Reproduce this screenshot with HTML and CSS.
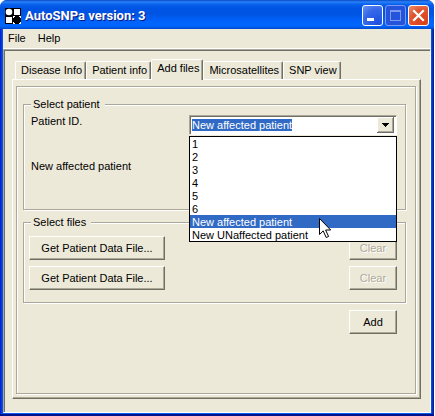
FILE: index.html
```html
<!DOCTYPE html>
<html lang="en">
<head>
    <meta charset="UTF-8">
    <meta name="viewport" content="width=device-width, initial-scale=1.0">
    <title>AutoSNPa version: 3</title>
    <link rel="stylesheet" href="styles.css">
</head>
<body>
    <div class="window">
        <header class="titlebar">
            <svg class="app-icon" width="16" height="16" viewBox="0 0 16 16" aria-hidden="true">
                <rect width="16" height="16" fill="#000"/>
                <circle cx="4" cy="4" r="3.3" fill="#fff"/>
                <rect x="9" y="1" width="6" height="6" fill="#fff"/>
                <rect x="1" y="9" width="6" height="6" fill="#fff"/>
                <path d="M8 8h2v1H9v1H8zM14 8h2v2h-1V9h-1zM8 14h1v1h1v1H8zM15 14h1v2h-2v-1h1z" fill="#fff"/>
            </svg>
            <h1>AutoSNPa version: 3</h1>
            <div class="window-buttons">
                <button class="win-btn" type="button" aria-label="Minimize">
                    <svg width="19" height="19" viewBox="0 0 19 19"><rect x="4" y="12" width="7" height="3" fill="#fff"/></svg>
                </button>
                <button class="win-btn win-max" type="button" aria-label="Maximize" disabled>
                    <svg width="19" height="19" viewBox="0 0 19 19"><path d="M4 4h11v11H4zM5 6v8h9V6z" fill="#7d98ec" fill-rule="evenodd"/></svg>
                </button>
                <button class="win-btn win-close" type="button" aria-label="Close">
                    <svg width="19" height="19" viewBox="0 0 19 19"><path d="M5 5l9 9M14 5l-9 9" stroke="#fff" stroke-width="2.2" stroke-linecap="square"/></svg>
                </button>
            </div>
        </header>

        <nav class="menubar">
            <button type="button">File</button>
            <button type="button">Help</button>
        </nav>

        <main class="client">
            <div class="tabs" role="tablist">
                <button class="tab" role="tab" type="button">Disease Info</button>
                <button class="tab" role="tab" type="button">Patient info</button>
                <button class="tab active" role="tab" type="button" aria-selected="true">Add files</button>
                <button class="tab" role="tab" type="button">Microsatellites</button>
                <button class="tab" role="tab" type="button">SNP view</button>
            </div>
            <div class="tab-panel">
                <form class="frame">
                    <fieldset class="select-patient">
                        <legend>Select patient</legend>
                        <div class="row">
                            <label for="patientId">Patient ID.</label>
                            <div class="combo">
                                <input type="text" id="patientId" value="New affected patient" autocomplete="off" spellcheck="false">
                                <button class="combo-arrow" type="button" aria-label="Show patients">
                                    <svg width="7" height="4" viewBox="0 0 7 4" shape-rendering="crispEdges"><path d="M0 0h7v1H6v1H5v1H4v1H3V3H2V2H1V1H0z"/></svg>
                                </button>
                                <select class="combo-list" id="patientList" size="8" aria-label="Patients">
                                    <option>1</option>
                                    <option>2</option>
                                    <option>3</option>
                                    <option>4</option>
                                    <option>5</option>
                                    <option>6</option>
                                    <option selected>New affected patient</option>
                                    <option>New UNaffected patient</option>
                                </select>
                                <svg class="pointer" width="13" height="21" viewBox="0 0 13 21" aria-hidden="true">
                                    <path d="M.5 .5v16l3.7-3.6 3 6.6 2.4-1-3-6.5h5.1z" fill="#fff" stroke="#000"/>
                                </svg>
                            </div>
                        </div>
                        <output class="status" id="patientStatus">New affected patient</output>
                    </fieldset>

                    <fieldset class="select-files">
                        <legend>Select files</legend>
                        <div class="row">
                            <button class="btn btn-wide" type="button">Get Patient Data File...</button>
                            <button class="btn" type="button" disabled>Clear</button>
                        </div>
                        <div class="row">
                            <button class="btn btn-wide" type="button">Get Patient Data File...</button>
                            <button class="btn" type="button" disabled>Clear</button>
                        </div>
                    </fieldset>

                    <div class="actions">
                        <button class="btn" type="button">Add</button>
                    </div>
                </form>
            </div>
        </main>
    </div>
    <script>
        const patientId = document.getElementById("patientId");
        const patientList = document.getElementById("patientList");

        patientList.addEventListener("change", function() {
            patientId.value = patientList.value;
            document.getElementById("patientStatus").textContent = patientList.value;
        });

        patientId.focus();
        patientId.select();
    </script>
</body>
</html>
```
FILE: styles.css
```css
* {
    box-sizing: border-box;
}
body {
    margin: 0;
    padding-right: 1px;
    background: #fff;
    color: #000;
    font-family: "Liberation Sans", Arial, sans-serif;
    font-size: 11px;
    line-height: 13px;
}
button, input, select {
    margin: 0;
    padding: 0;
    border: none;
    border-radius: 0;
    background: none;
    color: inherit;
    font: inherit;
    outline: none;
}
svg {
    display: block;
}

/* window */
.window {
    display: flex;
    flex-direction: column;
    min-height: 100vh;
    padding: 0 3px 3px;
    border-radius: 7px 7px 0 0;
    background: linear-gradient(to right, #0019cf, #0a5be8 3px, #0a5be8 calc(100% - 3px), #00138c);
    box-shadow: inset 0 -2px #00138c;
}
.titlebar {
    display: flex;
    align-items: center;
    height: 29px;
    margin: 0 -3px;
    padding: 2px 5px 0;
    border-radius: 7px 7px 0 0;
    background: linear-gradient(#0a48c8, #2b84f8 2px, #0a63ee 4px, #0054e3 8px, #0054e3 14px, #0062fb 21px, #0066ff 26px, #0049cc);
    color: #fff;
}
.titlebar h1 {
    flex: 1;
    margin: 0 0 0 4px;
    font: bold 13px/18px Roboto, "Open Sans", sans-serif;
    text-shadow: 1px 1px #0a1883;
}
.window-buttons {
    display: flex;
    gap: 2px;
}
.win-btn {
    width: 21px;
    height: 21px;
    border: 1px solid #fff;
    border-radius: 3px;
    background: radial-gradient(circle at 80% 90%, #1c4fe0, #3568e8 60%, #6b93f4);
}
.win-max {
    border-color: #7d98ec;
    background: #2454dc;
}
.win-close {
    background: radial-gradient(circle at 80% 90%, #d8401a, #e0542f 60%, #ee9070);
}

/* menu */
.menubar {
    display: flex;
    gap: 12px;
    padding: 3px 5px;
    border-bottom: 1px solid #fff;
    background: #ece9d8;
}

/* client area */
.client {
    flex: 1;
    display: flex;
    flex-direction: column;
    padding: 9px 9px 13px 8px;
    border: 1px solid;
    border-color: #aca899 #fff #fff #aca899;
    background: #ece9d8;
    box-shadow: inset 1px 1px #716f64;
}
.tabs {
    display: flex;
    align-items: flex-end;
    padding-left: 3px;
}
.tab {
    height: 18px;
    padding: 0 3px 0 5px;
    border: solid;
    border-width: 1px 1px 0 1px;
    border-color: #fff #716f64 #fff #fff;
    border-radius: 2px 2px 0 0;
    box-shadow: inset -1px 0 #aca899;
}
.tab.active {
    position: relative;
    height: 21px;
    margin-bottom: -1px;
    padding-bottom: 3px;
    background: #ece9d8;
}
.tab-panel {
    flex: 1;
    display: flex;
    padding: 6px 3px 3px;
    border: 1px solid;
    border-color: #fff #716f64 #716f64 #fff;
    box-shadow: inset -1px -1px #aca899;
}
.frame {
    flex: 1;
    margin: 0 1px 1px 0;
    padding: 11px 9px 8px 6px;
    border: 1px solid #aca899;
    box-shadow: 1px 1px #fff, inset 1px 1px #fff;
}

/* groups */
fieldset {
    min-width: 0;
    margin: 0;
    border: 1px solid #aca899;
    box-shadow: 1px 1px #fff, inset 1px 1px #fff;
}
legend {
    padding: 0 5px 0 2px;
    background: #ece9d8;
}
.row {
    display: flex;
    justify-content: space-between;
}
.select-patient {
    padding: 4px 8px 36px 7px;
}
.select-files {
    margin-top: 6px;
    padding: 7px 8px 12px 5px;
}
.select-files legend {
    margin-left: 2px;
}
.select-files .row + .row {
    margin-top: 6px;
}
.status {
    display: block;
    margin-top: 25px;
}

/* combo box */
.combo {
    position: relative;
    display: flex;
    width: 208px;
    height: 20px;
    padding: 2px;
    border: 1px solid;
    border-color: #aca899 #fff #fff #aca899;
    background: #fff;
    box-shadow: inset 1px 1px #716f64;
}
.combo input {
    flex: 1;
    min-width: 0;
    height: 14px;
}
.combo input::selection {
    background: #316ac5;
    color: #fff;
}
.combo-arrow {
    display: flex;
    align-items: center;
    justify-content: center;
    width: 17px;
    height: 16px;
    margin-top: -1px;
    background: #ece9d8;
    box-shadow: inset -1px -1px #716f64, inset 1px 1px #fff, inset -2px -2px #aca899;
}
.combo-list {
    position: absolute;
    top: 20px;
    left: -1px;
    width: 208px;
    height: 106px;
    border: 1px solid #000;
    background: #fff;
    overflow: hidden;
    z-index: 1;
}
.combo-list option {
    min-height: 13px;
    height: 13px;
    padding: 1px 2px 0;
    line-height: 13px;
}
.combo-list option:checked {
    background: linear-gradient(#316ac5, #316ac5);
    -webkit-text-fill-color: #fff;
}
.pointer {
    position: absolute;
    top: 102px;
    left: 129px;
    z-index: 2;
}

/* buttons */
.btn {
    width: 48px;
    height: 24px;
    border: 1px solid;
    border-color: #fff #716f64 #716f64 #fff;
    background: #ece9d8;
    box-shadow: inset -1px -1px #aca899;
}
.btn-wide {
    width: 136px;
}
.btn:disabled {
    color: #aca899;
    text-shadow: 1px 1px #fff;
}
.actions {
    display: flex;
    justify-content: flex-end;
    margin-top: 7px;
    padding-right: 9px;
}
```
